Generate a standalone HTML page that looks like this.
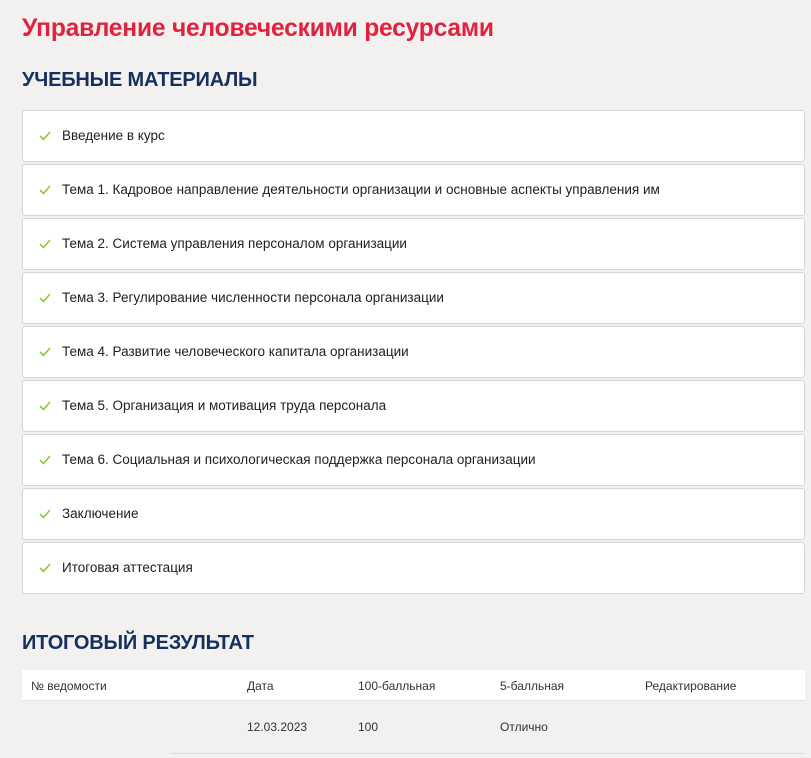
<!DOCTYPE html>
<html><head><meta charset="utf-8"><style>
body{margin:0;background:#f2f1ef;font-family:"Liberation Sans",sans-serif;width:811px;height:758px;overflow:hidden;position:relative}
h1{position:absolute;left:22px;top:15px;margin:0;font-size:24.6px;font-weight:bold;color:#e2213f;letter-spacing:-0.2px}
h2{position:absolute;left:22px;margin:0;font-size:20px;font-weight:bold;color:#15305e;letter-spacing:-0.2px}
.item{position:absolute;left:22px;width:781px;height:50px;background:#fff;border:1px solid #d4d4d4;border-radius:3px;box-sizing:content-box}
.item span{position:absolute;left:39px;top:17px;font-size:13.5px;color:#1e1e1e}
.item svg{position:absolute;left:16px;top:20px}
.tbl{position:absolute;left:22px;top:670px;width:783px;height:30px;background:#fff;border-bottom:1px solid #e2e2e2}
.c{position:absolute;font-family:"Liberation Sans Narrow","Liberation Sans",sans-serif;font-size:12px;color:#333}
</style></head><body>
<h1>Управление человеческими ресурсами</h1>
<h2 style="top:69px">УЧЕБНЫЕ МАТЕРИАЛЫ</h2>
<div class="item" style="top:110px"><svg width="12" height="10" viewBox="0 0 12 10"><path d="M1 5l3.5 3.5L11 1" fill="none" stroke="#8dc63f" stroke-width="1.6"/></svg><span>Введение в курс</span></div>
<div class="item" style="top:164px"><svg width="12" height="10" viewBox="0 0 12 10"><path d="M1 5l3.5 3.5L11 1" fill="none" stroke="#8dc63f" stroke-width="1.6"/></svg><span>Тема 1. Кадровое направление деятельности организации и основные аспекты управления им</span></div>
<div class="item" style="top:218px"><svg width="12" height="10" viewBox="0 0 12 10"><path d="M1 5l3.5 3.5L11 1" fill="none" stroke="#8dc63f" stroke-width="1.6"/></svg><span>Тема 2. Система управления персоналом организации</span></div>
<div class="item" style="top:272px"><svg width="12" height="10" viewBox="0 0 12 10"><path d="M1 5l3.5 3.5L11 1" fill="none" stroke="#8dc63f" stroke-width="1.6"/></svg><span>Тема 3. Регулирование численности персонала организации</span></div>
<div class="item" style="top:326px"><svg width="12" height="10" viewBox="0 0 12 10"><path d="M1 5l3.5 3.5L11 1" fill="none" stroke="#8dc63f" stroke-width="1.6"/></svg><span>Тема 4. Развитие человеческого капитала организации</span></div>
<div class="item" style="top:380px"><svg width="12" height="10" viewBox="0 0 12 10"><path d="M1 5l3.5 3.5L11 1" fill="none" stroke="#8dc63f" stroke-width="1.6"/></svg><span>Тема 5. Организация и мотивация труда персонала</span></div>
<div class="item" style="top:434px"><svg width="12" height="10" viewBox="0 0 12 10"><path d="M1 5l3.5 3.5L11 1" fill="none" stroke="#8dc63f" stroke-width="1.6"/></svg><span>Тема 6. Социальная и психологическая поддержка персонала организации</span></div>
<div class="item" style="top:488px"><svg width="12" height="10" viewBox="0 0 12 10"><path d="M1 5l3.5 3.5L11 1" fill="none" stroke="#8dc63f" stroke-width="1.6"/></svg><span>Заключение</span></div>
<div class="item" style="top:542px"><svg width="12" height="10" viewBox="0 0 12 10"><path d="M1 5l3.5 3.5L11 1" fill="none" stroke="#8dc63f" stroke-width="1.6"/></svg><span>Итоговая аттестация</span></div>
<h2 style="top:632px">ИТОГОВЫЙ РЕЗУЛЬТАТ</h2>
<div class="tbl"></div>
<div class="c" style="left:31px;top:679px">№ ведомости</div>
<div class="c" style="left:247px;top:679px">Дата</div>
<div class="c" style="left:358px;top:679px">100-балльная</div>
<div class="c" style="left:500px;top:679px">5-балльная</div>
<div class="c" style="left:645px;top:679px">Редактирование</div>
<div class="c" style="left:247px;top:720px">12.03.2023</div>
<div class="c" style="left:358px;top:720px">100</div>
<div class="c" style="left:500px;top:720px">Отлично</div>
<div style="position:absolute;left:170px;top:753px;width:635px;height:1px;background:#dcdcdc"></div>
</body></html>
